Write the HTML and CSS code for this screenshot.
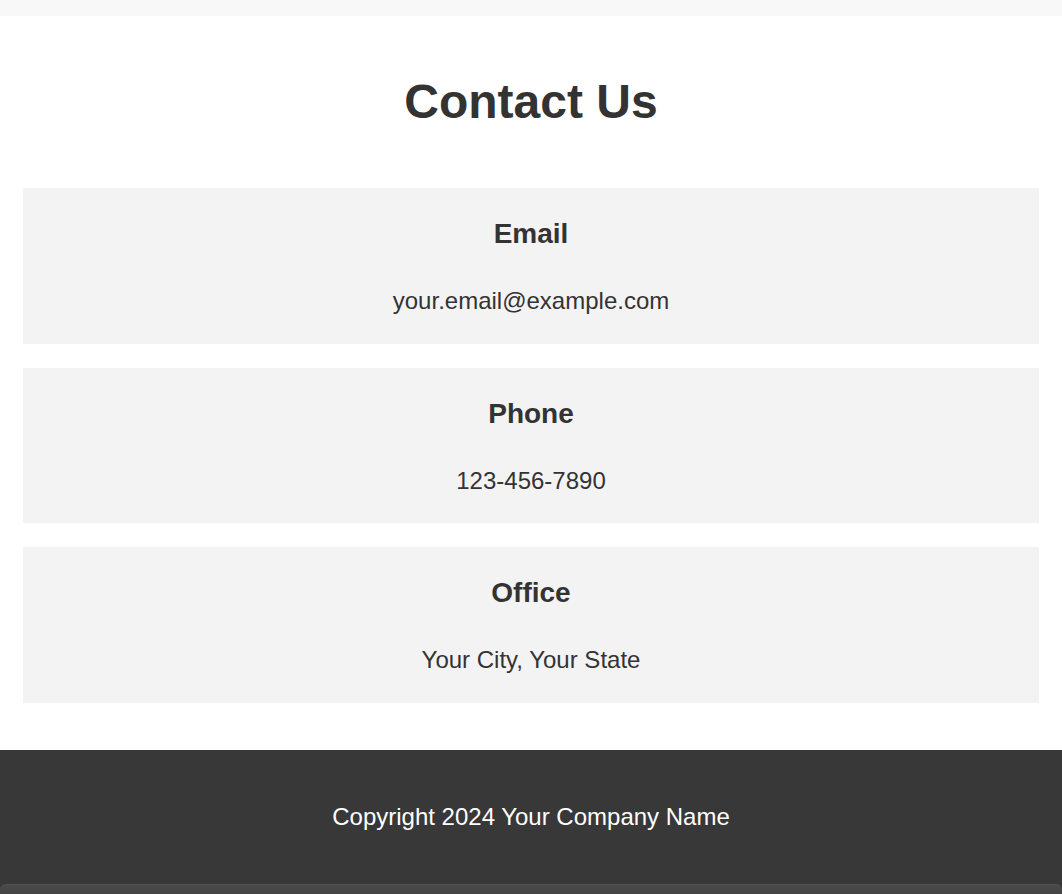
FILE: index.html
```html
<!DOCTYPE html>
<html lang="en">
<head>
<meta charset="utf-8">
<title>Contact Us</title>
<link rel="stylesheet" href="styles.css">
</head>
<body>
<div class="topstrip"></div>
<main class="contact">
  <h1 class="contact-title">Contact Us</h1>
  <div class="cards">
    <section class="card">
      <h3 class="card-title">Email</h3>
      <p class="card-text">your.email@example.com</p>
    </section>
    <section class="card">
      <h3 class="card-title">Phone</h3>
      <p class="card-text">123-456-7890</p>
    </section>
    <section class="card">
      <h3 class="card-title">Office</h3>
      <p class="card-text">Your City, Your State</p>
    </section>
  </div>
</main>
<footer class="footer">
  <p class="footer-text">Copyright 2024 Your Company Name</p>
  <div class="footer-band"></div>
</footer>
</body>
</html>
```
FILE: styles.css
```css
html, body {
  margin: 0;
  padding: 0;
}
body {
  background: #f8f8f8;
  font-family: "Liberation Sans", Arial, sans-serif;
  color: #333333;
}
.topstrip {
  height: 16px;
  background: #f8f8f8;
}
.contact {
  background: #ffffff;
  padding: 58px 23px 47.5px;
}
.contact-title {
  margin: 0 0 59px;
  font-size: 48px;
  font-weight: bold;
  line-height: normal;
  text-align: center;
  color: #333333;
}
.cards {
  display: flex;
  flex-direction: column;
  gap: 24px;
}
.card {
  background: #f3f3f3;
  padding: 30px 20px 28.5px;
  text-align: center;
}
.card-title {
  margin: 0 0 37px;
  font-size: 28px;
  font-weight: bold;
  line-height: normal;
}
.card-text {
  margin: 0;
  font-size: 24px;
  line-height: normal;
}
.footer {
  background: #383838;
  padding-top: 53px;
}
.footer-text {
  margin: 0;
  padding-bottom: 53px;
  font-size: 24px;
  line-height: normal;
  color: #ffffff;
  text-align: center;
}
.footer-band {
  height: 12px;
  background: linear-gradient(#4a4a4a, #404040);
  border-top-left-radius: 6px;
  border-top-right-radius: 6px;
  border-top: 1px solid #505050;
}
```
